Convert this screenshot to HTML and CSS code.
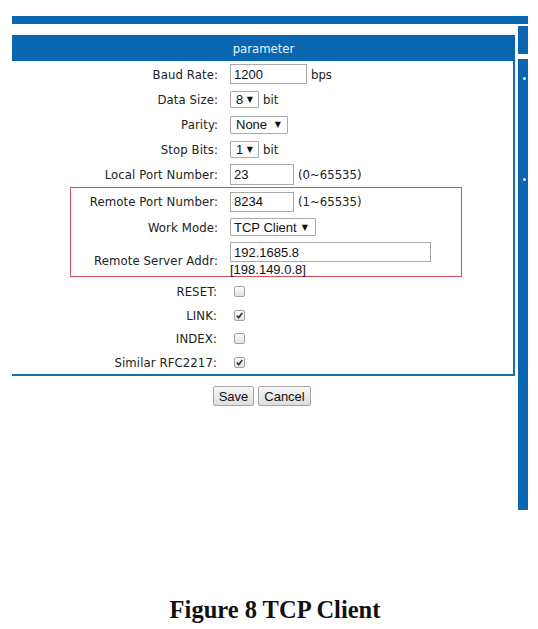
FILE: index.html
```html
<!DOCTYPE html>
<html>
<head>
<meta charset="utf-8">
<link rel="stylesheet" href="styles.css">
</head>
<body>
<div class="page">
  <div class="topbar"></div>
  <div class="main">
    <div class="left">
      <div class="panel">
        <div class="head">parameter</div>
        <div class="rows">
          <div class="row h26"><div class="lbl">Baud Rate:</div><div class="val"><input class="in w77" value="1200"><span class="unit">bps</span></div></div>
          <div class="row h25"><div class="lbl">Data Size:</div><div class="val"><span class="sel w29"><span class="opt">8</span><span class="arr">▼</span></span><span class="unit">bit</span></div></div>
          <div class="row h25"><div class="lbl">Parity:</div><div class="val"><span class="sel w58"><span class="opt">None</span><span class="arr">▼</span></span></div></div>
          <div class="row h25"><div class="lbl">Stop Bits:</div><div class="val"><span class="sel w29"><span class="opt">1</span><span class="arr">▼</span></span><span class="unit">bit</span></div></div>
          <div class="row h25"><div class="lbl">Local Port Number:</div><div class="val"><input class="in w64 h21" value="23"><span class="unit">(0~65535)</span></div></div>
          <div class="redbox">
            <div class="row h27"><div class="lbl">Remote Port Number:</div><div class="val"><input class="in w64" value="8234"><span class="unit">(1~65535)</span></div></div>
            <div class="row h24"><div class="lbl">Work Mode:</div><div class="val"><span class="sel w86"><span class="opt">TCP Client</span><span class="arr">▼</span></span></div></div>
            <div class="row h37"><div class="lbl lbl-low">Remote Server Addr:</div><div class="val val-col"><input class="in w201" value="192.1685.8"><span class="hint">[198.149.0.8]</span></div></div>
          </div>
          <div class="checks">
            <div class="row h24 c"><div class="lbl">RESET:</div><div class="val"><span class="cb"></span></div></div>
            <div class="row h24 c"><div class="lbl">LINK:</div><div class="val"><span class="cb"><svg viewBox="0 0 9 9" width="9" height="9"><path d="M1.8 4.6 L3.7 6.6 L7.3 2" fill="none" stroke="#3a3a3a" stroke-width="1.7"/></svg></span></div></div>
            <div class="row h23 c"><div class="lbl">INDEX:</div><div class="val"><span class="cb"></span></div></div>
            <div class="row h24 c"><div class="lbl">Similar RFC2217:</div><div class="val"><span class="cb"><svg viewBox="0 0 9 9" width="9" height="9"><path d="M1.8 4.6 L3.7 6.6 L7.3 2" fill="none" stroke="#3a3a3a" stroke-width="1.7"/></svg></span></div></div>
          </div>
        </div>
      </div>
      <div class="btns"><button class="btn w41">Save</button><button class="btn w53">Cancel</button></div>
    </div>
    <div class="side">
      <div class="side-a"></div>
      <div class="side-b"><span class="dot"></span><span class="dot dot2"></span></div>
    </div>
  </div>
  <div class="caption">Figure 8 TCP Client</div>
</div>
</body>
</html>
```

FILE: styles.css
```css
html, body {
  margin: 0;
  padding: 0;
  background: #ffffff;
}
.page {
  width: 538px;
  height: 629px;
  padding-left: 12px;
  box-sizing: border-box;
  overflow: hidden;
  font-family: "DejaVu Sans", "Liberation Sans", sans-serif;
  font-stretch: condensed;
  font-size: 13px;
  color: #222;
}
.topbar {
  margin-top: 16px;
  width: 516px;
  height: 8px;
  background: #0a66b0;
}
.main {
  display: flex;
  align-items: flex-start;
  column-gap: 3px;
}
.left {
  width: 503px;
  margin-top: 11px;
}
.panel {
  border-right: 2px solid #1a6ea2;
  border-bottom: 2px solid #1a6ea2;
}
.head {
  height: 26px;
  margin-right: -2px;
  background: #0a66b0;
  color: #e6f4ff;
  display: flex;
  align-items: center;
  justify-content: center;
  font-size: 13px;
}
.row {
  --lw: 206px;
  display: grid;
  grid-template-columns: var(--lw) auto;
  column-gap: 12px;
  align-items: center;
}
.h21 { height: 21px; }
.h23 { height: 23px; }
.h24 { height: 24px; }
.h25 { height: 25px; }
.h26 { height: 26px; }
.h27 { height: 27px; }
.h37 { height: 37px; }
.lbl {
  text-align: right;
  white-space: nowrap;
  padding-right: 0;
  letter-spacing: 0.1px;
}
.val {
  display: flex;
  align-items: center;
}
.val-col {
  flex-direction: column;
  align-items: flex-start;
  align-self: start;
  padding-top: 3px;
}
.lbl-low {
  padding-top: 4px;
}
.unit {
  margin-left: 4px;
}
.in {
  box-sizing: border-box;
  height: 20px;
  margin: 0;
  border: 1px solid #a9a9a9;
  padding: 0 3px;
  font-family: "Liberation Sans", Arial, sans-serif;
  font-size: 13px;
  color: #111;
  background: #fff;
  outline: none;
}
.in.h21 { height: 21px; }
.w77 { width: 77px; }
.w64 { width: 64px; }
.w201 { width: 201px; }
.hint {
  font-family: "Liberation Sans", Arial, sans-serif;
  font-size: 13px;
  line-height: 15px;
  color: #111;
}
.sel {
  box-sizing: border-box;
  height: 17px;
  border: 1px solid #a9a9a9;
  border-radius: 1px;
  display: flex;
  align-items: center;
  justify-content: space-between;
  padding: 0 5px 0 5px;
  font-family: "Liberation Sans", Arial, sans-serif;
  font-size: 13px;
  color: #111;
  background: #fff;
}
.w29 { width: 29px; }
.w58 { width: 58px; height: 18px; padding-right: 6px; }
.w86 { width: 86px; height: 18px; padding-left: 3px; padding-right: 7px; }
.arr {
  font-family: "DejaVu Sans", sans-serif;
  font-stretch: normal;
  font-size: 8px;
  color: #111;
}
.redbox {
  margin-left: 58px;
  width: 392px;
  box-sizing: border-box;
  border: 1px solid #d7505c;
}
.redbox .row { --lw: 147px; }
.checks {
  padding-top: 2px;
}
.row.c .lbl { padding-right: 1px; }
.cb {
  box-sizing: border-box;
  width: 11px;
  height: 11px;
  margin-left: 4px;
  border: 1px solid #a2a2a2;
  border-radius: 2px;
  background: linear-gradient(#fcfcfc, #e2e2e2);
  display: flex;
  align-items: center;
  justify-content: center;
}
.btns {
  margin-top: 10px;
  display: flex;
  justify-content: center;
  column-gap: 4px;
  padding-right: 3px;
}
.btn {
  box-sizing: border-box;
  height: 20px;
  margin: 0;
  padding: 0;
  border: 1px solid #a6a6a6;
  border-radius: 2px;
  background: linear-gradient(#f6f6f6, #dedede);
  font-family: "Liberation Sans", Arial, sans-serif;
  font-size: 13px;
  color: #111;
}
.w41 { width: 41px; }
.w53 { width: 53px; }
.side {
  width: 10px;
  margin-top: 2px;
  display: flex;
  flex-direction: column;
  row-gap: 5px;
}
.side-a {
  height: 28px;
  background: #0a66b0;
}
.side-b {
  height: 451px;
  background: #0a66b0;
  display: flex;
  flex-direction: column;
  align-items: center;
  padding-top: 18px;
  box-sizing: border-box;
}
.dot {
  width: 3px;
  height: 3px;
  border-radius: 50%;
  background: #e8f2fb;
  margin-left: 2px;
}
.dot2 {
  margin-top: 98px;
}
.caption {
  margin-top: 86px;
  width: 526px;
  text-align: center;
  font-family: "Liberation Serif", "DejaVu Serif", serif;
  font-weight: bold;
  font-size: 24.5px;
  line-height: 28px;
  color: #111;
}
```
